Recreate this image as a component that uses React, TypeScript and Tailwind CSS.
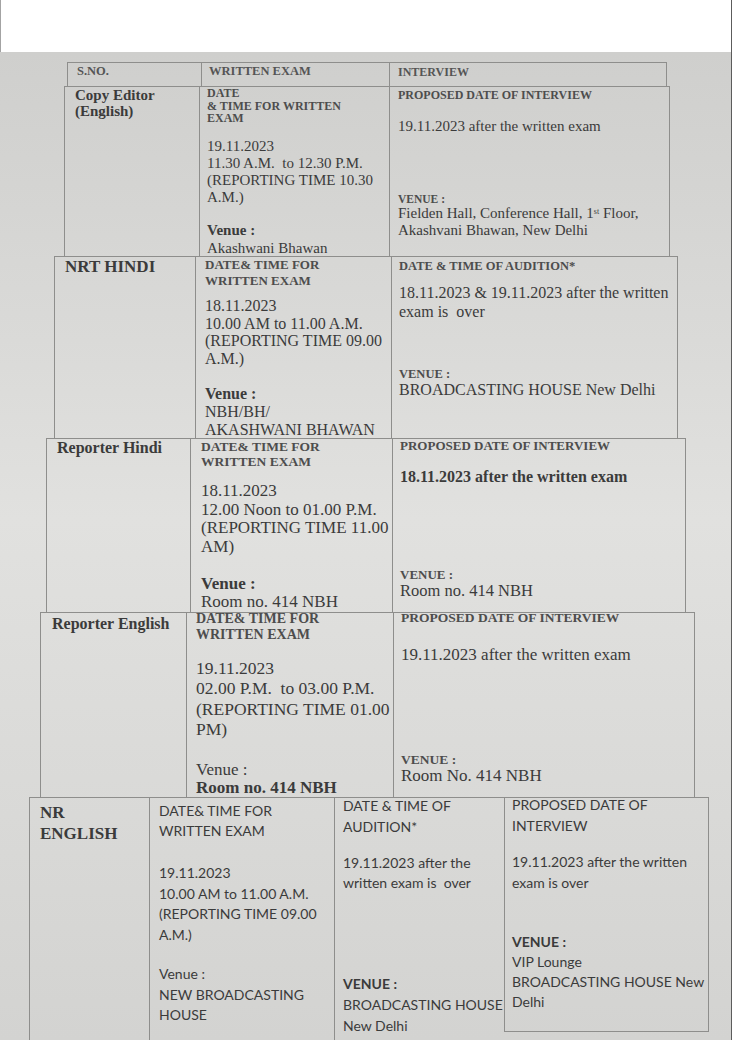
import type { ReactNode } from "react";

const serif = "font-['Liberation_Serif','Times_New_Roman',serif]";
const sans = "font-['Lato','Liberation_Sans',sans-serif]";

function Row({ className, children }: { className: string; children: ReactNode }) {
  return <div className={`flex shrink-0 self-start border-[#8e8e8c] ${className}`}>{children}</div>;
}

function Cell({ className, first, children }: { className: string; first?: boolean; children: ReactNode }) {
  return (
    <div className={`shrink-0 whitespace-nowrap border-[#8e8e8c] ${first ? "" : "border-l"} ${className}`}>
      {children}
    </div>
  );
}

export default function App() {
  return (
    <div className="flex h-[1040px] w-[732px] flex-col overflow-hidden border-r border-[#5c5c5c] bg-linear-to-b from-[#cdcdcb] via-[#e1e1df] to-[#d3d3d1] text-[#3b3b3b]">
      {/* white strip above the photo */}
      <div className="h-[52px] shrink-0 border-l border-[#a3a3a3] bg-white" />

      <div className={`flex flex-col pt-[10px] ${serif}`}>
        {/* header */}
        <Row className="ml-[67px] h-[25px] border">
          <Cell first className="w-[133px] pl-[9px] pt-px text-[12.5px] font-bold leading-[14px] text-[#555]">
            S.NO.
          </Cell>
          <Cell className="w-[188px] pl-[7px] pt-px text-[12.5px] font-bold leading-[14px] text-[#555]">
            WRITTEN EXAM
          </Cell>
          <Cell className="w-[277px] pl-[8px] pt-[2px] text-[12px] font-bold leading-[14px] text-[#555]">
            INTERVIEW
          </Cell>
        </Row>

        {/* Copy Editor */}
        <Row className="-mt-px ml-[64px] h-[171px] border">
          <Cell first className="w-[134px] pl-[10px] text-[15px] font-bold leading-[16px]">
            Copy Editor
            <br />
            (English)
          </Cell>
          <Cell className="w-[190px] pl-[7px]">
            <div className="text-[12px] font-bold leading-[12.5px] text-[#4d4d4d]">
              DATE
              <br />
              &amp; TIME FOR WRITTEN
              <br />
              EXAM
            </div>
            <div className="mt-[13px] text-[15px] leading-[17px]">
              19.11.2023
              <br />
              11.30 A.M.&nbsp; to 12.30 P.M.
              <br />
              (REPORTING TIME 10.30
              <br />
              A.M.)
            </div>
            <div className="mt-[15px] text-[15px] leading-[18px]">
              <span className="font-bold">Venue :</span>
              <br />
              Akashwani Bhawan
            </div>
          </Cell>
          <Cell className="w-[280px] pl-[8px] pt-[2px]">
            <div className="text-[12px] font-bold leading-[12px] text-[#4d4d4d]">PROPOSED DATE OF INTERVIEW</div>
            <div className="mt-[17px] text-[15px] leading-[17px]">19.11.2023 after the written exam</div>
            <div className="mt-[58px] text-[11.5px] font-bold leading-[12px] text-[#4d4d4d]">VENUE :</div>
            <div className="text-[15px] leading-[17px]">
              Fielden Hall, Conference Hall, 1<sup className="text-[8px]">st</sup> Floor,
              <br />
              Akashvani Bhawan, New Delhi
            </div>
          </Cell>
        </Row>

        {/* NRT Hindi */}
        <Row className="-mt-px ml-[54px] h-[183px] border">
          <Cell first className="w-[140px] pl-[10px] text-[17px] font-bold leading-[20px]">
            NRT HINDI
          </Cell>
          <Cell className="w-[196px] pl-[9px]">
            <div className="text-[13px] font-bold leading-[16px] text-[#4d4d4d]">
              DATE&amp; TIME FOR
              <br />
              WRITTEN EXAM
            </div>
            <div className="mt-[8px] text-[16px] leading-[17.5px]">
              18.11.2023
              <br />
              10.00 AM to 11.00 A.M.
              <br />
              (REPORTING TIME 09.00
              <br />
              A.M.)
            </div>
            <div className="mt-[18px] text-[16px] leading-[18px]">
              <span className="font-bold">Venue :</span>
              <br />
              NBH/BH/
              <br />
              AKASHWANI BHAWAN
            </div>
          </Cell>
          <Cell className="w-[286px] pl-[7px] pt-[2px]">
            <div className="text-[12.5px] font-bold leading-[14px] text-[#4d4d4d]">DATE &amp; TIME OF AUDITION*</div>
            <div className="mt-[10px] text-[16px] leading-[19px]">
              18.11.2023 &amp; 19.11.2023 after the written
              <br />
              exam is&nbsp; over
            </div>
            <div className="mt-[47px] text-[12.5px] font-bold leading-[13px] text-[#4d4d4d]">VENUE :</div>
            <div className="text-[16px] leading-[18px]">BROADCASTING HOUSE New Delhi</div>
          </Cell>
        </Row>

        {/* Reporter Hindi */}
        <Row className="-mt-px ml-[46px] h-[175px] border">
          <Cell first className="w-[143px] pl-[10px] text-[16px] font-bold leading-[18px]">
            Reporter Hindi
          </Cell>
          <Cell className="w-[202px] pl-[10px]">
            <div className="text-[13.5px] font-bold leading-[15px] text-[#4d4d4d]">
              DATE&amp; TIME FOR
              <br />
              WRITTEN EXAM
            </div>
            <div className="mt-[13px] text-[17px] leading-[18.5px]">
              18.11.2023
              <br />
              12.00 Noon to 01.00 P.M.
              <br />
              (REPORTING TIME 11.00
              <br />
              AM)
            </div>
            <div className="mt-[19px] text-[17px] leading-[18px]">
              <span className="font-bold">Venue :</span>
              <br />
              Room no. 414 NBH
            </div>
          </Cell>
          <Cell className="w-[293px] pl-[7px]">
            <div className="text-[13px] font-bold leading-[14px] text-[#4d4d4d]">PROPOSED DATE OF INTERVIEW</div>
            <div className="mt-[15px] text-[16px] font-bold leading-[18px]">18.11.2023 after the written exam</div>
            <div className="mt-[82px] text-[13px] font-bold leading-[14px] text-[#4d4d4d]">VENUE :</div>
            <div className="text-[16.5px] leading-[18px]">Room no. 414 NBH</div>
          </Cell>
        </Row>

        {/* Reporter English */}
        <Row className="-mt-px ml-[40px] h-[186px] border">
          <Cell first className="w-[145px] pl-[11px] pt-[2px] text-[16px] font-bold leading-[18px]">
            Reporter English
          </Cell>
          <Cell className="w-[207px] pl-[9px]">
            <div className="-mt-[2px] text-[14px] font-bold leading-[16px] text-[#4d4d4d]">
              DATE&amp; TIME FOR
              <br />
              WRITTEN EXAM
            </div>
            <div className="mt-[15px] text-[17.5px] leading-[20.3px]">
              19.11.2023
              <br />
              02.00 P.M.&nbsp; to 03.00 P.M.
              <br />
              (REPORTING TIME 01.00
              <br />
              PM)
            </div>
            <div className="mt-[22px] text-[17px] leading-[18px]">
              Venue :
              <br />
              <span className="font-bold">Room no. 414 NBH</span>
            </div>
          </Cell>
          <Cell className="w-[301px] pl-[7px]">
            <div className="-mt-[3px] text-[13.5px] font-bold leading-[15px] text-[#4d4d4d]">PROPOSED DATE OF INTERVIEW</div>
            <div className="mt-[20px] text-[17px] leading-[20px]">19.11.2023 after the written exam</div>
            <div className="mt-[87px] text-[13.5px] font-bold leading-[15px] text-[#4d4d4d]">VENUE :</div>
            <div className="text-[17px] leading-[18px]">Room No. 414 NBH</div>
          </Cell>
        </Row>

        {/* NR English */}
        <Row className="-mt-px ml-[29px] h-[245px] border-l border-t">
          <Cell first className="w-[119px] pl-[10px] pt-[4px] text-[17px] font-bold leading-[21px]">
            NR
            <br />
            ENGLISH
          </Cell>
          <Cell className={`w-[185px] pl-[9px] pt-[3px] ${sans}`}>
            <div className="text-[14px] leading-[20px]">
              DATE&amp; TIME FOR
              <br />
              WRITTEN EXAM
            </div>
            <div className="mt-[22px] text-[14px] leading-[20.5px]">
              19.11.2023
              <br />
              10.00 AM to 11.00 A.M.
              <br />
              (REPORTING TIME 09.00
              <br />
              A.M.)
            </div>
            <div className="mt-[19px] text-[14px] leading-[20.5px]">
              Venue :
              <br />
              NEW BROADCASTING
              <br />
              HOUSE
            </div>
          </Cell>
          <Cell className={`w-[170px] pl-[8px] ${sans}`}>
            <div className="-mt-[3px] text-[14px] leading-[21px]">
              DATE &amp; TIME OF
              <br />
              AUDITION*
            </div>
            <div className="mt-[16px] text-[14px] leading-[20px]">
              19.11.2023 after the
              <br />
              written exam is&nbsp; over
            </div>
            <div className="mt-[80px] text-[14px] leading-[21px]">
              <span className="font-bold">VENUE :</span>
              <br />
              BROADCASTING HOUSE
              <br />
              New Delhi
            </div>
          </Cell>
          <Cell className={`h-[234px] w-[205px] self-start border-r border-b pl-[7px] ${sans}`}>
            <div className="-mt-[4px] text-[14px] leading-[21px]">
              PROPOSED DATE OF
              <br />
              INTERVIEW
            </div>
            <div className="mt-[15px] text-[14px] leading-[21px]">
              19.11.2023 after the written
              <br />
              exam is over
            </div>
            <div className="mt-[39px] text-[14px] leading-[20px]">
              <span className="font-bold">VENUE :</span>
              <br />
              VIP Lounge
              <br />
              BROADCASTING HOUSE New
              <br />
              Delhi
            </div>
          </Cell>
        </Row>
      </div>
    </div>
  );
}
